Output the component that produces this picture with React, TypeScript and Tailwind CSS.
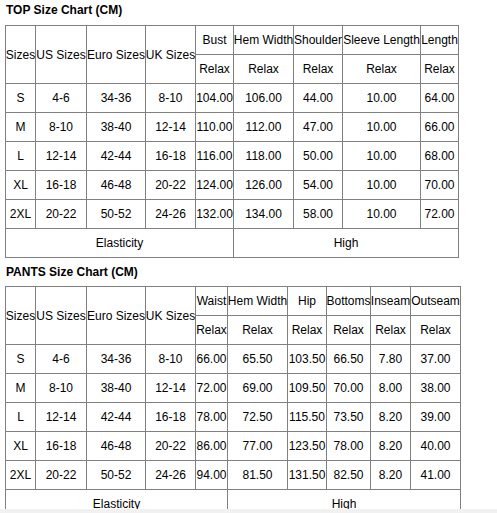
const topMeasures = ["Bust", "Hem Width", "Shoulder", "Sleeve Length", "Length"];
const topRows = [
  ["S", "4-6", "34-36", "8-10", "104.00", "106.00", "44.00", "10.00", "64.00"],
  ["M", "8-10", "38-40", "12-14", "110.00", "112.00", "47.00", "10.00", "66.00"],
  ["L", "12-14", "42-44", "16-18", "116.00", "118.00", "50.00", "10.00", "68.00"],
  ["XL", "16-18", "46-48", "20-22", "124.00", "126.00", "54.00", "10.00", "70.00"],
  ["2XL", "20-22", "50-52", "24-26", "132.00", "134.00", "58.00", "10.00", "72.00"],
];

const pantsMeasures = ["Waist", "Hem Width", "Hip", "Bottoms", "Inseam", "Outseam"];
const pantsRows = [
  ["S", "4-6", "34-36", "8-10", "66.00", "65.50", "103.50", "66.50", "7.80", "37.00"],
  ["M", "8-10", "38-40", "12-14", "72.00", "69.00", "109.50", "70.00", "8.00", "38.00"],
  ["L", "12-14", "42-44", "16-18", "78.00", "72.50", "115.50", "73.50", "8.20", "39.00"],
  ["XL", "16-18", "46-48", "20-22", "86.00", "77.00", "123.50", "78.00", "8.20", "40.00"],
  ["2XL", "20-22", "50-52", "24-26", "94.00", "81.50", "131.50", "82.50", "8.20", "41.00"],
];

const sizeHeads = ["Sizes", "US Sizes", "Euro Sizes", "UK Sizes"];

const cell =
  "flex items-center justify-center whitespace-nowrap border-r border-b border-[#808080] text-center";

type ChartProps = {
  measures: string[];
  rows: string[][];
  gridCls: string;
  restSpan: string;
};

const Chart = ({ measures, rows, gridCls, restSpan }: ChartProps) => (
  <div className={`grid auto-rows-[29px] border-l border-t border-[#808080] w-fit ${gridCls}`}>
    {sizeHeads.map((h) => (
      <div key={h} className={`${cell} row-span-2`}>
        {h}
      </div>
    ))}
    {measures.map((m) => (
      <div key={m} className={cell}>
        {m}
      </div>
    ))}
    {measures.map((m) => (
      <div key={m + "-r"} className={cell}>
        Relax
      </div>
    ))}
    {rows.map((r) =>
      r.map((v, i) => (
        <div key={r[0] + i} className={cell}>
          {v}
        </div>
      ))
    )}
    <div className={`${cell} col-span-5`}>Elasticity</div>
    <div className={`${cell} ${restSpan}`}>High</div>
  </div>
);

export default function App() {
  return (
    <div className="min-h-[513px] bg-white pl-[5px] text-[12px] leading-[14px] text-black font-['Liberation_Sans',Arial,sans-serif]">
      <div className="ml-[1px] pt-[3px] pb-[8px] font-bold">TOP Size Chart (CM)</div>
      <Chart
        measures={topMeasures}
        rows={topRows}
        gridCls="grid-cols-[30px_51px_59px_50px_38px_60px_49px_78px_38px]"
        restSpan="col-span-4"
      />
      <div className="ml-[1px] pt-[7px] pb-[7px] font-bold">PANTS Size Chart (CM)</div>
      <Chart
        measures={pantsMeasures}
        rows={pantsRows}
        gridCls="grid-cols-[30px_51px_59px_50px_32px_60px_39px_44px_40px_50px]"
        restSpan="col-span-5"
      />
      <div className="fixed bottom-0 left-0 right-0 h-[4px] bg-[#f1f1f1]" />
    </div>
  );
}
